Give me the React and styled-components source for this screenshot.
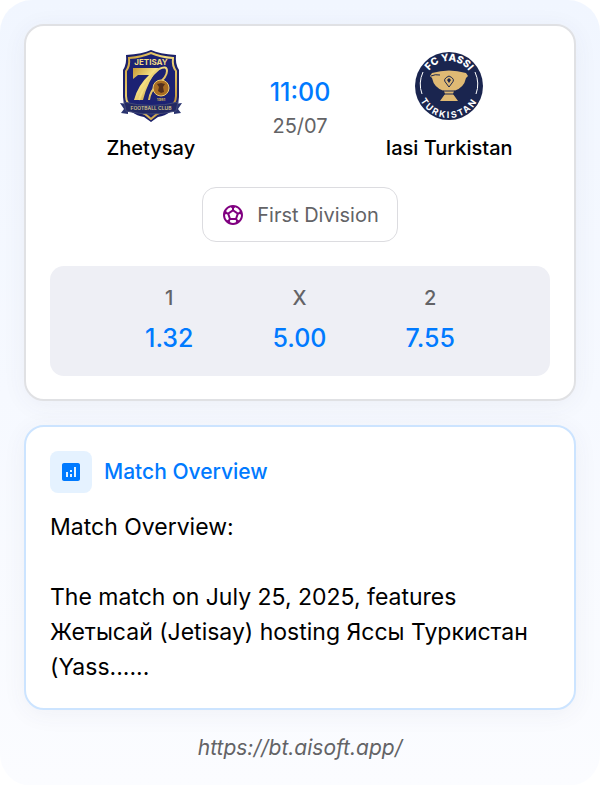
import React from 'react'
import styled, { createGlobalStyle } from 'styled-components';
import { MdAnalytics, MdOutlineSportsSoccer } from 'react-icons/md';

const GlobalStyle= createGlobalStyle`
*{
box-sizing:border-box;
}
body{
margin:0;
background:#ffffff;
font-family:Inter, 'Noto Sans', sans-serif;
color:#000000;
}
`;

const Page= styled.main`
display:flex;
flex-direction:column;
gap:24px;
min-height:100vh;
padding:24px;
border-radius:32px;
background:linear-gradient(180deg, #f1f6ff 0%, #fbfcff 100%);
`;

const Card= styled.section`
padding:24px 24px 23px;
border:${({$accent})=>$accent ? '2px solid #cce4ff' : '2px solid #e0e1e4'};
border-radius:20px;
background:#ffffff;
box-shadow:0 4px 24px rgba(60,60,100,0.06);
`;

const Teams= styled.div`
display:grid;
grid-template-columns:1fr auto 1fr;
column-gap:18px;
`;
const Team= styled.div`
display:flex;
flex-direction:column;
align-items:center;
gap:12px;
`;
const TeamName= styled.div`
font-size:20px;
line-height:28px;
font-weight:500;
white-space:nowrap;
`;
const Kickoff= styled.div`
display:flex;
flex-direction:column;
align-items:center;
padding-top:24px;
`;
const Time= styled.time`
font-size:25px;
line-height:36px;
font-weight:500;
color:#007aff;
`;
const DateText= styled.time`
font-size:20px;
line-height:32px;
color:#636366;
`;

const Division= styled.div`
display:flex;
align-items:center;
gap:12px;
width:fit-content;
height:55px;
margin:25px auto 24px;
padding:0 18px;
border:1px solid #dcdce0;
border-radius:14px;
font-size:20px;
color:#636366;
svg{
color:#800080;
}
`;

const Odds= styled.div`
display:flex;
justify-content:space-evenly;
padding:16px 16px 18px;
border-radius:14px;
background:#eeeff5;
`;
const Odd= styled.div`
display:flex;
flex-direction:column;
align-items:center;
gap:4px;
`;
const OddLabel= styled.div`
font-size:20px;
line-height:32px;
font-weight:500;
color:#636366;
`;
const OddValue= styled.div`
font-size:25px;
line-height:40px;
font-weight:500;
color:#007aff;
`;

const Heading= styled.div`
display:flex;
align-items:center;
gap:12px;
margin-bottom:17px;
`;
const IconBox= styled.div`
display:flex;
align-items:center;
justify-content:center;
width:42px;
height:42px;
border-radius:8px;
background:#e5f2ff;
color:#007aff;
`;
const Title= styled.h2`
margin:0;
font-size:21px;
line-height:28px;
font-weight:500;
color:#007aff;
`;
const Overview= styled.p`
margin:0;
font-size:23px;
line-height:35px;
white-space:pre-line;
`;

const Footer= styled.footer`
text-align:center;
font-size:21px;
line-height:28px;
font-style:italic;
`;
const SiteLink= styled.a`
color:#636366;
text-decoration:none;
`;

const odds=[
  {label:'1', value:'1.32'},
  {label:'X', value:'5.00'},
  {label:'2', value:'7.55'},
]

const overview=`Match Overview:

The match on July 25, 2025, features Жетысай (Jetisay) hosting Яссы Туркистан (Yass......`

const JetisayLogo = () => (
  <svg width="72" height="72" viewBox="0 0 72 72" role="img" aria-label="Jetisay">
    <defs>
      <linearGradient id="gold" x1="0" y1="0" x2="1" y2="1">
        <stop offset="0" stopColor="#c79a35"/>
        <stop offset="0.45" stopColor="#f5df83"/>
        <stop offset="1" stopColor="#b58128"/>
      </linearGradient>
    </defs>
    <path d="M36 0Q44 4 61 5q-1 9 3 15v27q0 10-9 15-5 4-12 5l-7 5-7-5q-7-1-12-5-9-5-9-15V20q4-6 3-15Q28 4 36 0z" fill="#1b2069"/>
    <path d="M36 3q9 4 22 5-1 8 3 13v25q0 8-8 13-5 3-11 5l-6 5-6-5q-6-2-11-5-8-5-8-13V21q4-5 3-13 13-1 22-5z" fill="#1c2273" stroke="url(#gold)" strokeWidth="2"/>
    <text x="36" y="15" textAnchor="middle" fontSize="8" fontWeight="700" fill="#f3dc83">JETISAY</text>
    <path d="M18 18h26q-11 12-16 32h-9q4-15 15-25H23l-5 4z" fill="url(#gold)"/>
    <path d="M24 50Q31 29 44 19q8-4 8 2 0 6-9 13-8 7-9 16" fill="none" stroke="url(#gold)" strokeWidth="2"/>
    <circle cx="46" cy="38" r="8" fill="#a96d23" stroke="#edcc70" strokeWidth="1"/>
    <path d="m42 34 4-1 4 1-2 3 1 5-3 1-3-2 1-4z" fill="#54301d"/>
    <text x="46" y="51" textAnchor="middle" fontSize="4" fontWeight="700" fill="#d4b65a">1981</text>
    <path d="m5 53 8 1v10l-7-1 3-4zM67 53l-8 1v10l7-1-3-4z" fill="#29336f"/>
    <path d="M9 52q27 7 54 0l-2 9q-25 6-50 0z" fill="#222963" stroke="#414878" strokeWidth="1"/>
    <text x="36" y="60" textAnchor="middle" fontSize="5" fontWeight="600" fill="#d2c18b">FOOTBALL CLUB</text>
  </svg>
)

const YassiLogo = () => (
  <svg width="72" height="72" viewBox="0 0 72 72" role="img" aria-label="FC Yassi Turkistan">
    <defs>
      <path id="arcTop" d="M11 36a25 25 0 0 1 50 0"/>
      <path id="arcBottom" d="M4 36a32 32 0 0 0 64 0"/>
    </defs>
    <circle cx="36" cy="36" r="34" fill="#1a254f"/>
    <path d="M10 22q-5 11-1 22M62 22q5 11 1 22" fill="none" stroke="#ffffff" strokeWidth="1"/>
    <text fontSize="10" fontWeight="800" fill="#ffffff" textAnchor="middle">
      <textPath href="#arcTop" startOffset="50%">FC YASSI</textPath>
    </text>
    <text fontSize="9" fontWeight="700" letterSpacing="2" fill="#ffffff" textAnchor="middle">
      <textPath href="#arcBottom" startOffset="50%">TURKISTAN</textPath>
    </text>
    <path d="M19 23q17-5 34 0l2 3-2 2q-2 10-12 13l-1 3 5 7H27l5-7-1-3q-10-3-12-13l-2-2z" fill="#dfb974"/>
    <path d="M18 26q4-2 9-1M30 41h12M30 44h12" fill="none" stroke="#1a254f" strokeWidth="1"/>
    <path d="M36 26q7 3 3 7l-3 4-3-4q-4-4 3-7z" fill="none" stroke="#1a254f" strokeWidth="1"/>
    <path d="m36 28 2 2-2 3-2-3z" fill="#1a254f"/>
  </svg>
)

const App = () => {
  return (
    <>
      <GlobalStyle/>
      <Page>
        <Card>
          <Teams>
            <Team>
              <JetisayLogo/>
              <TeamName>Zhetysay</TeamName>
            </Team>
            <Kickoff>
              <Time>11:00</Time>
              <DateText>25/07</DateText>
            </Kickoff>
            <Team>
              <YassiLogo/>
              <TeamName>Iasi Turkistan</TeamName>
            </Team>
          </Teams>
          <Division>
            <MdOutlineSportsSoccer size={24}/>
            First Division
          </Division>
          <Odds>
            {odds.map((odd)=>(
              <Odd key={odd.label}>
                <OddLabel>{odd.label}</OddLabel>
                <OddValue>{odd.value}</OddValue>
              </Odd>
            ))}
          </Odds>
        </Card>
        <Card $accent>
          <Heading>
            <IconBox><MdAnalytics size={24}/></IconBox>
            <Title>Match Overview</Title>
          </Heading>
          <Overview>{overview}</Overview>
        </Card>
        <Footer>
          <SiteLink href="https://bt.aisoft.app/">https://bt.aisoft.app/</SiteLink>
        </Footer>
      </Page>
    </>
  )
}

export default App
